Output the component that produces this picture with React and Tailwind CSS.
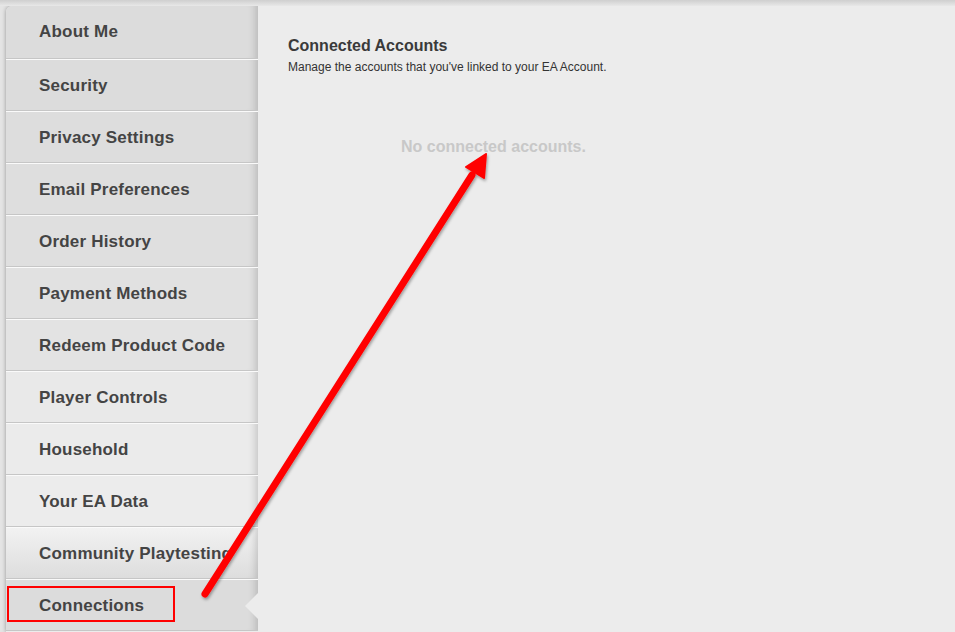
import React from 'react'

const ITEMS = [
  { label: 'About Me', bg: 'bg-[#dcdcdc]' },
  { label: 'Security', bg: 'bg-[#dcdcdc]' },
  { label: 'Privacy Settings', bg: 'bg-[#dddddd]' },
  { label: 'Email Preferences', bg: 'bg-[#dedede]' },
  { label: 'Order History', bg: 'bg-[#dfdfdf]' },
  { label: 'Payment Methods', bg: 'bg-[#e1e1e1]' },
  { label: 'Redeem Product Code', bg: 'bg-[#e3e3e3]' },
  { label: 'Player Controls', bg: 'bg-[#e9e9e9]' },
  { label: 'Household', bg: 'bg-[#ebebeb]' },
  { label: 'Your EA Data', bg: 'bg-[#ececec]' },
  { label: 'Community Playtesting', bg: 'bg-gradient-to-b from-[#f2f2f2] to-[#dddddd]' },
  { label: 'Connections', bg: 'bg-[#dcdcdc]', active: true },
]

export default function App() {
  return (
    <div className="relative w-[955px] h-[632px] overflow-hidden bg-[#e4e4e4] font-['Liberation_Sans',Arial,sans-serif]">
      <div className="absolute inset-0 bg-gradient-to-b from-[#cfcfcf] to-[#e8e8e8] h-[6px]" />
      <div className="ml-[6px] mt-[6px] h-[626px] flex rounded-tl-[6px] overflow-hidden shadow-[0_0_4px_rgba(0,0,0,0.35)] bg-[#ececec]">
        <nav className="w-[252px] shrink-0 flex flex-col">
          {ITEMS.map((it, i) => (
            <div
              key={it.label}
              className={`relative shrink-0 flex items-center pl-[33px] ${i === 0 ? 'h-[53px] pb-[1px]' : 'h-[52px] pt-[1px] border-t border-t-[#fafafa]'} ${it.bg} border-b border-b-[#c6c6c6] shadow-[inset_-10px_0_8px_-8px_rgba(0,0,0,0.18)]`}
            >
              <span className="text-[17px] font-bold text-[#444] tracking-[0.2px] whitespace-nowrap">{it.label}</span>
              {it.active && (
                <div className="absolute right-0 top-[13px] w-0 h-0 border-y-[13px] border-y-transparent border-r-[13px] border-r-[#ececec]" />
              )}
            </div>
          ))}
        </nav>
        <main className="flex-1 pl-[30px] pt-[30px]">
          <h2 className="text-[16px] font-bold text-[#3a3a3a] leading-[19px]">Connected Accounts</h2>
          <p className="text-[12px] text-[#333] mt-[5px] leading-[14px]">Manage the accounts that you've linked to your EA Account.</p>
          <p className="mt-[61px] ml-[113px] text-[16px] font-bold text-[#c8c8c8]">No connected accounts.</p>
        </main>
      </div>

      <div className="absolute left-[7px] top-[586px] w-[168px] h-[36px] border-2 border-[#ff0000]" />

      <svg className="absolute inset-0" width="955" height="632" viewBox="0 0 955 632">
        <defs>
          <filter id="sh" x="-20%" y="-20%" width="140%" height="140%">
            <feDropShadow dx="1" dy="2" stdDeviation="1.5" floodColor="#000" floodOpacity="0.35" />
          </filter>
        </defs>
        <g filter="url(#sh)">
          <line x1="205" y1="594" x2="472" y2="175" stroke="#ff0000" strokeWidth="7" strokeLinecap="round" />
          <polygon points="486,154 466,167 484,178" fill="#ff0000" stroke="#ff0000" strokeWidth="2" strokeLinejoin="round" />
        </g>
      </svg>
    </div>
  )
}
